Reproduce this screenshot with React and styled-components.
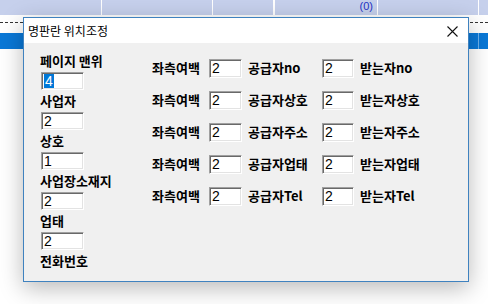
import React from "react";
import styled, { createGlobalStyle } from "styled-components";

const GlobalStyle = createGlobalStyle`
  html, body {
    margin: 0;
    padding: 0;
    background: #ffffff;
  }
  body {
    width: 488px;
    height: 304px;
    overflow: hidden;
  }
`;

const Screen = styled.div`
  position: relative;
  width: 488px;
  height: 304px;
  overflow: hidden;
  background: #ffffff;
`;

const HeaderBand = styled.div`
  height: 15px;
  background: #c6d0ec;
  display: flex;
`;

const HeaderCell = styled.div`
  width: ${(p) => p.$w}px;
  flex: none;
  border-right: ${(p) => (p.$thick ? 2 : 1)}px solid #ffffff;
  box-sizing: border-box;
  display: flex;
  justify-content: flex-end;
  align-items: flex-start;
  padding-right: 4px;
  font-family: "Liberation Sans", Arial, sans-serif;
  font-size: 11px;
  line-height: 12px;
  color: #2433c6;
`;

const DashRow = styled.div`
  height: 18px;
  display: flex;
  align-items: flex-start;
  padding-top: 7px;
  box-sizing: border-box;
`;

const Dashes = styled.div`
  width: 100%;
  height: 1px;
  background: repeating-linear-gradient(
    to right,
    #333333 0 3px,
    transparent 3px 5px
  );
`;

const SelectBar = styled.div`
  height: 16px;
  background: #0a78d7;
  display: flex;
  justify-content: flex-end;
`;

const SelectGap = styled.div`
  width: 1px;
  margin-right: 9px;
  background: #6fb2ec;
`;

const Dialog = styled.div`
  position: absolute;
  left: 23px;
  top: 17px;
  width: 446px;
  height: 265px;
  box-sizing: border-box;
  border: 1px solid #3f82bf;
  background: #f0f0f0;
  box-shadow: 0 6px 22px rgba(0, 0, 0, 0.28);
  display: flex;
  flex-direction: column;
`;

const TitleBar = styled.div`
  height: 25px;
  flex: none;
  background: #ffffff;
  display: flex;
  align-items: center;
  justify-content: space-between;
  padding: 0 10px 0 4px;
`;

const Title = styled.span`
  font-family: "Noto Sans CJK KR", "Noto Sans", sans-serif;
  font-size: 12px;
  color: #000000;
  line-height: 14px;
  margin-top: 1px;
`;

const CloseIcon = () => (
  <svg width="11" height="11" viewBox="0 0 11 11" style={{ marginTop: 2 }}>
    <path d="M0.5 0.5 L10.5 10.5 M10.5 0.5 L0.5 10.5" stroke="#111" strokeWidth="1.1" />
  </svg>
);

const Client = styled.div`
  flex: 1;
  display: flex;
  align-items: flex-start;
`;

const LeftColumn = styled.div`
  width: 112px;
  flex: none;
  padding: 11px 0 0 16px;
  display: flex;
  flex-direction: column;
  gap: 4px;
`;

const Label = styled.div`
  font-family: "Noto Sans CJK KR", "Noto Sans", sans-serif;
  font-weight: 700;
  font-size: 13px;
  line-height: 14px;
  height: 14px;
  color: #000000;
  white-space: nowrap;
`;

const Field = styled.div`
  width: ${(p) => p.$w}px;
  height: ${(p) => p.$h}px;
  margin-left: ${(p) => p.$ml || 0}px;
  box-sizing: border-box;
  background: #ffffff;
  border-style: solid;
  border-width: 1px;
  border-color: #a0a0a0 #ffffff #ffffff #a0a0a0;
  box-shadow: inset 1px 1px 0 #696969, inset -1px -1px 0 #e3e3e3;
  padding: 1px 0 0 2px;
  font-family: "Liberation Sans", Arial, sans-serif;
  font-size: 14px;
  line-height: ${(p) => p.$h - 4}px;
  color: #000000;
`;

const Selected = styled.span`
  display: inline-block;
  padding: 0 1px;
  background: #0078d7;
  color: #ffffff;
`;

const Grid = styled.div`
  margin-top: 16px;
  display: grid;
  grid-template-columns: 56px 40px 73px 39px auto;
  grid-auto-rows: 19px;
  row-gap: 13px;
  align-items: center;
`;

const GridLabel = styled(Label)`
  margin-top: -2px;
`;

const rows = [
  ["공급자no", "받는자no"],
  ["공급자상호", "받는자상호"],
  ["공급자주소", "받는자주소"],
  ["공급자업태", "받는자업태"],
  ["공급자Tel", "받는자Tel"],
];

const leftFields = [
  { label: "페이지 맨위", value: "4", selected: true },
  { label: "사업자", value: "2" },
  { label: "상호", value: "1" },
  { label: "사업장소재지", value: "2" },
  { label: "업태", value: "2" },
];

export default function App() {
  return (
    <>
      <GlobalStyle />
      <Screen>
        <HeaderBand>
          <HeaderCell $w={102} />
          <HeaderCell $w={111} />
          <HeaderCell $w={62} $thick />
          <HeaderCell $w={103}>(0)</HeaderCell>
          <HeaderCell $w={101} />
        </HeaderBand>
        <DashRow>
          <Dashes />
        </DashRow>
        <SelectBar>
          <SelectGap />
        </SelectBar>

        <Dialog>
          <TitleBar>
            <Title>명판란 위치조정</Title>
            <CloseIcon />
          </TitleBar>
          <Client>
            <LeftColumn>
              {leftFields.map((f) => (
                <React.Fragment key={f.label}>
                  <Label>{f.label}</Label>
                  <Field $w={43} $h={18} $ml={1}>
                    {f.selected ? <Selected>{f.value}</Selected> : f.value}
                  </Field>
                </React.Fragment>
              ))}
              <Label>전화번호</Label>
            </LeftColumn>
            <Grid>
              {rows.map(([supplier, receiver]) => (
                <React.Fragment key={supplier}>
                  <GridLabel>좌측여백</GridLabel>
                  <Field $w={33} $h={19} $ml={1}>2</Field>
                  <GridLabel>{supplier}</GridLabel>
                  <Field $w={32} $h={19} $ml={1}>2</Field>
                  <GridLabel>{receiver}</GridLabel>
                </React.Fragment>
              ))}
            </Grid>
          </Client>
        </Dialog>
      </Screen>
    </>
  );
}
